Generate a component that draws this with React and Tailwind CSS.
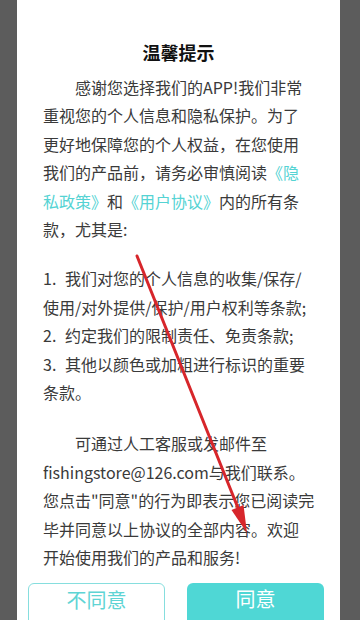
import React from 'react';

const Link = ({ children }) => <span className="text-[#55d3d3]">{children}</span>;

const Num = ({ children }) => <span className="inline-block w-[22px]">{children}</span>;

export default function App() {
  return (
    <div className="relative w-[360px] h-[620px] overflow-hidden bg-[#5c5c5c] font-['Noto_Sans_CJK_SC','Noto_Sans',sans-serif]">
      <div className="ml-[17px] w-[323px] h-full bg-white pt-[40px] pl-[26px] pr-[16px]">
        {/* 标题 */}
        <h1 className="text-center text-[18px] leading-[24px] font-bold text-[#111] pr-[10px]">温馨提示</h1>

        {/* 正文 */}
        <div className="text-[16px] leading-[28.4px] text-[#3a3a3a] whitespace-nowrap">
          <p className="mt-[9px] indent-[32px]">
            感谢您选择我们的APP!我们非常<br />
            重视您的个人信息和隐私保护。为了<br />
            更好地保障您的个人权益，在您使用<br />
            我们的产品前，请务必审慎阅读<Link>《隐</Link><br />
            <Link>私政策》</Link>和<Link>《用户协议》</Link>内的所有条<br />
            款，尤其是:
          </p>
          <p className="mt-[21px]">
            <Num>1.</Num>我们对您的个人信息的收集/保存/<br />
            使用/对外提供/保护/用户权利等条款;<br />
            <Num>2.</Num>约定我们的限制责任、免责条款;<br />
            <Num>3.</Num>其他以颜色或加粗进行标识的重要<br />
            条款。
          </p>
          <p className="mt-[23px] indent-[32px]">
            可通过人工客服或发邮件至<br />
            fishingstore@126.com与我们联系。<br />
            您点击"同意"的行为即表示您已阅读完<br />
            毕并同意以上协议的全部内容。欢迎<br />
            开始使用我们的产品和服务!
          </p>
        </div>

        {/* 按钮 */}
        <div className="mt-[11px] -ml-[15px] flex gap-[22px]">
          <button className="w-[140px] h-[48px] rounded-[6px] border border-[#86dede] text-[#5ed4d4] text-[20px] leading-[32px] pb-[16px]">
            不同意
          </button>
          <button className="w-[140px] h-[48px] rounded-[6px] bg-[#4fd7d5] text-white text-[20px] leading-[32px] pb-[16px]">
            同意
          </button>
        </div>
      </div>

      {/* 标注箭头 */}
      <svg className="absolute left-0 top-0 pointer-events-none" width="360" height="620" viewBox="0 0 360 620">
        <line x1="137" y1="256" x2="238" y2="508" stroke="#d7262b" strokeWidth="3" strokeLinecap="round" />
        <polygon points="247,533 243.5,505 231.5,510" fill="#d7262b" />
      </svg>
    </div>
  );
}
